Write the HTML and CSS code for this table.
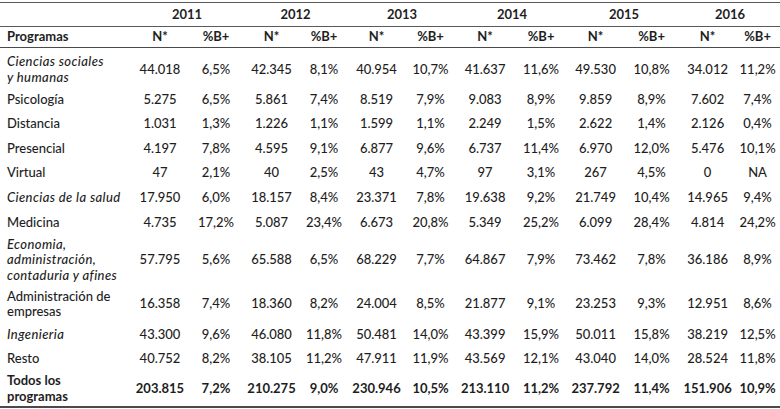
FILE: index.html
```html
<!DOCTYPE html>
<html lang="es">
<head>
<meta charset="utf-8">
<title>Programas</title>
<link rel="stylesheet" href="styles.css">
</head>
<body>
<table class="data">
  <colgroup>
    <col class="c-prog">
    <col class="c58"><col class="c54">
    <col class="c57"><col class="c48">
    <col class="c57"><col class="c51">
    <col class="c58"><col class="c54">
    <col class="c55"><col class="c57">
    <col class="c55"><col class="c45">
  </colgroup>
  <thead>
    <tr class="years">
      <th></th>
      <th colspan="2">2011</th>
      <th colspan="2">2012</th>
      <th colspan="2">2013</th>
      <th colspan="2">2014</th>
      <th colspan="2">2015</th>
      <th colspan="2">2016</th>
    </tr>
    <tr class="sub">
      <th class="label">Programas</th>
      <th>N*</th><th>%B+</th>
      <th>N*</th><th>%B+</th>
      <th>N*</th><th>%B+</th>
      <th>N*</th><th>%B+</th>
      <th>N*</th><th>%B+</th>
      <th>N*</th><th>%B+</th>
    </tr>
  </thead>
  <tbody>
    <tr class="h40 shift">
      <td class="label it">Ciencias sociales<br>y humanas</td>
      <td>44.018</td><td>6,5%</td><td>42.345</td><td>8,1%</td><td>40.954</td><td>10,7%</td><td>41.637</td><td>11,6%</td><td>49.530</td><td>10,8%</td><td>34.012</td><td>11,2%</td>
    </tr>
    <tr class="h24">
      <td class="label">Psicología</td>
      <td>5.275</td><td>6,5%</td><td>5.861</td><td>7,4%</td><td>8.519</td><td>7,9%</td><td>9.083</td><td>8,9%</td><td>9.859</td><td>8,9%</td><td>7.602</td><td>7,4%</td>
    </tr>
    <tr class="h24">
      <td class="label">Distancia</td>
      <td>1.031</td><td>1,3%</td><td>1.226</td><td>1,1%</td><td>1.599</td><td>1,1%</td><td>2.249</td><td>1,5%</td><td>2.622</td><td>1,4%</td><td>2.126</td><td>0,4%</td>
    </tr>
    <tr class="h25">
      <td class="label">Presencial</td>
      <td>4.197</td><td>7,8%</td><td>4.595</td><td>9,1%</td><td>6.877</td><td>9,6%</td><td>6.737</td><td>11,4%</td><td>6.970</td><td>12,0%</td><td>5.476</td><td>10,1%</td>
    </tr>
    <tr class="h24">
      <td class="label">Virtual</td>
      <td>47</td><td>2,1%</td><td>40</td><td>2,5%</td><td>43</td><td>4,7%</td><td>97</td><td>3,1%</td><td>267</td><td>4,5%</td><td>0</td><td>NA</td>
    </tr>
    <tr class="h25">
      <td class="label it">Ciencias de la salud</td>
      <td>17.950</td><td>6,0%</td><td>18.157</td><td>8,4%</td><td>23.371</td><td>7,8%</td><td>19.638</td><td>9,2%</td><td>21.749</td><td>10,4%</td><td>14.965</td><td>9,4%</td>
    </tr>
    <tr class="h25">
      <td class="label">Medicina</td>
      <td>4.735</td><td>17,2%</td><td>5.087</td><td>23,4%</td><td>6.673</td><td>20,8%</td><td>5.349</td><td>25,2%</td><td>6.099</td><td>28,4%</td><td>4.814</td><td>24,2%</td>
    </tr>
    <tr class="h50">
      <td class="label it">Economia,<br>administración,<br>contaduria y afines</td>
      <td>57.795</td><td>5,6%</td><td>65.588</td><td>6,5%</td><td>68.229</td><td>7,7%</td><td>64.867</td><td>7,9%</td><td>73.462</td><td>7,8%</td><td>36.186</td><td>8,9%</td>
    </tr>
    <tr class="h38">
      <td class="label">Administración de<br>empresas</td>
      <td>16.358</td><td>7,4%</td><td>18.360</td><td>8,2%</td><td>24.004</td><td>8,5%</td><td>21.877</td><td>9,1%</td><td>23.253</td><td>9,3%</td><td>12.951</td><td>8,6%</td>
    </tr>
    <tr class="h24">
      <td class="label it">Ingenieria</td>
      <td>43.300</td><td>9,6%</td><td>46.080</td><td>11,8%</td><td>50.481</td><td>14,0%</td><td>43.399</td><td>15,9%</td><td>50.011</td><td>15,8%</td><td>38.219</td><td>12,5%</td>
    </tr>
    <tr class="h24">
      <td class="label">Resto</td>
      <td>40.752</td><td>8,2%</td><td>38.105</td><td>11,2%</td><td>47.911</td><td>11,9%</td><td>43.569</td><td>12,1%</td><td>43.040</td><td>14,0%</td><td>28.524</td><td>11,8%</td>
    </tr>
    <tr class="total">
      <td class="label">Todos los<br>programas</td>
      <td>203.815</td><td>7,2%</td><td>210.275</td><td>9,0%</td><td>230.946</td><td>10,5%</td><td>213.110</td><td>11,2%</td><td>237.792</td><td>11,4%</td><td>151.906</td><td>10,9%</td>
    </tr>
  </tbody>
</table>
</body>
</html>
```
FILE: styles.css
```css
html, body {
  margin: 0;
  padding: 0;
  background: #ffffff;
}

body {
  font-family: "Lato", "Open Sans", sans-serif;
  font-size: 13px;
  font-weight: 500;
  color: #1e1e1e;
}

.data {
  margin-top: 2px;
  width: 780px;
  table-layout: fixed;
  border-collapse: separate;
  border-spacing: 0;
}

.c-prog { width: 131px; }
.c58 { width: 58px; }
.c57 { width: 57px; }
.c55 { width: 55px; }
.c54 { width: 54px; }
.c51 { width: 51px; }
.c48 { width: 48px; }
.c45 { width: 45px; }

.data th,
.data td {
  padding: 0;
  text-align: center;
  vertical-align: middle;
  line-height: 15.5px;
  white-space: nowrap;
}

.data th {
  font-weight: 700;
}

.data .label {
  text-align: left;
  padding-left: 7px;
}

.data .it {
  font-style: italic;
  letter-spacing: 0.4px;
}

.years {
  height: 25px;
}

.years th {
  border-top: 1px solid #5a5a5a;
  border-bottom: 1px solid #5a5a5a;
}

.sub {
  height: 21px;
}

.sub th {
  border-bottom: 1px solid #4a4a4a;
}

.h24 { height: 24px; }
.h25 { height: 25px; }
.h38 { height: 38px; }
.h40 { height: 40px; }
.h50 { height: 50px; }

.shift td {
  padding-top: 3px;
}

.total {
  height: 37px;
}

.total td {
  font-weight: 700;
  border-bottom: 2px solid #4a4a4a;
}
```
